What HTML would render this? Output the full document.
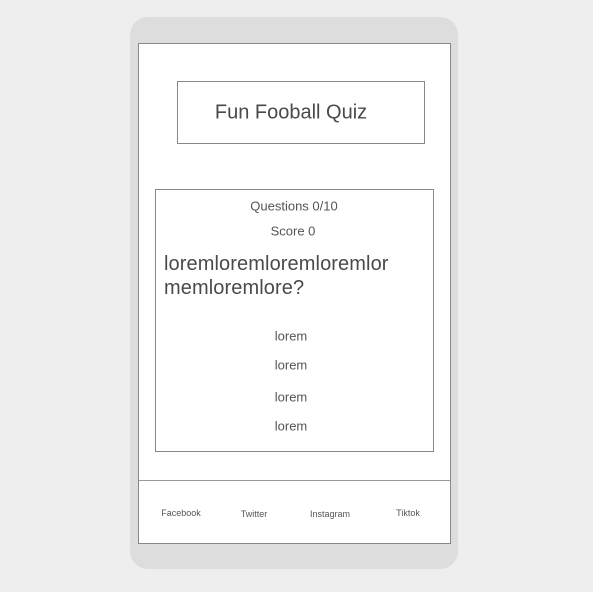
<!DOCTYPE html>
<html><head><style>
body{margin:0;width:593px;height:592px;background:#eeeeee;position:relative;overflow:hidden;font-family:"Liberation Sans",sans-serif;color:#555}
div{position:absolute;box-sizing:border-box}
.t{white-space:nowrap;transform:translate(-50%,-50%)}
</style></head><body>
<div style="left:130px;top:17px;width:328px;height:552px;background:#dddddd;border-radius:18px"></div>
<div style="left:138px;top:43px;width:313px;height:501px;background:#fff;border:1px solid #888"></div>
<div style="left:177px;top:81px;width:248px;height:63px;border:1px solid #888"></div>
<div class="t" style="left:291px;top:113px;font-size:20px;color:#4a4a4a">Fun Fooball Quiz</div>
<div style="left:155px;top:189px;width:279px;height:263px;border:1px solid #888"></div>
<div class="t" style="left:294px;top:206px;font-size:13px">Questions 0/10</div>
<div class="t" style="left:293px;top:231px;font-size:13px">Score 0</div>
<div style="left:164px;top:252px;font-size:20px;line-height:24px;color:#4a4a4a;letter-spacing:0.1px">loremloremloremloremlor<br>memloremlore?</div>
<div class="t" style="left:291px;top:336px;font-size:13px">lorem</div>
<div class="t" style="left:291px;top:365px;font-size:13px">lorem</div>
<div class="t" style="left:291px;top:397px;font-size:13px">lorem</div>
<div class="t" style="left:291px;top:426px;font-size:13px">lorem</div>
<div style="left:139px;top:480px;width:311px;height:1px;background:#999"></div>
<div class="t" style="left:181px;top:513px;font-size:9px">Facebook</div>
<div class="t" style="left:254px;top:514px;font-size:9px">Twitter</div>
<div class="t" style="left:330px;top:514px;font-size:9px">Instagram</div>
<div class="t" style="left:408px;top:513px;font-size:9px">Tiktok</div>
</body></html>
